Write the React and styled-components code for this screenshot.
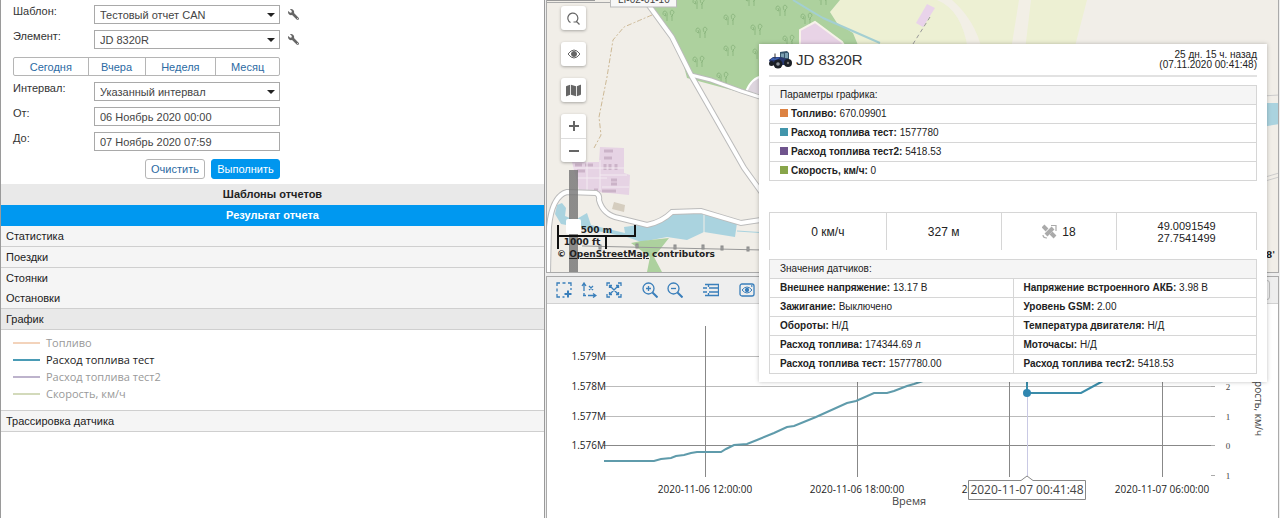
import React from 'react';
import styled, { createGlobalStyle, css } from 'styled-components';
import { FaWrench, FaMap } from 'react-icons/fa';

const GlobalStyle = createGlobalStyle`
  * { box-sizing: border-box; }
  body {
    margin: 0;
    font-family: "Liberation Sans", Arial, sans-serif;
    font-size: 11px;
    color: #222;
    background: #fff;
  }
  button, input, select { font-family: inherit; }
`

const Page = styled.div`
  display: flex;
  gap: 1px;
  min-height: 100vh;
  padding-right: 1px;
  background: #eee;
`

const Sidebar = styled.aside`
  flex: 0 0 545px;
  background: #fff;
  border-left: 1px solid #9a9a9a;
  border-right: 1px solid #9a9a9a;
`

const Workspace = styled.main`
  position: relative;
  flex: 1;
  min-width: 0;
  display: flex;
  flex-direction: column;
  gap: 3px;
`

/* ---------- report form ---------- */

const Form = styled.form`
  display: flex;
  flex-direction: column;
  gap: 6px;
  padding: 5px 12px;
`

const FormRow = styled.div`
  display: flex;
  align-items: flex-start;
  height: 19px;
`

const Label = styled.label`
  flex: 0 0 81px;
  line-height: 12px;
  color: #333;
`

const field = css`
  width: 186px;
  height: 19px;
  padding: 0 5px;
  border: 1px solid #a9a9a9;
  border-radius: 0;
  background: #fff;
  font-size: 11px;
  color: #444;
`

const SelectBox = styled.div`
  position: relative;
  height: 19px;

  select {
    ${field}
    appearance: none;
  }

  &::after {
    content: "";
    position: absolute;
    right: 5px;
    top: 8px;
    border: 4px solid transparent;
    border-top-color: #222;
    border-bottom: 0;
    pointer-events: none;
  }
`

const TextInput = styled.input`
  ${field}
`

const WrenchButton = styled.button`
  display: flex;
  margin: 4px 0 0 8px;
  padding: 0;
  border: 0;
  background: none;
  color: #666;

  svg { transform: scaleX(-1); }
`

const Ranges = styled.div`
  display: flex;
  width: 267px;
  height: 19px;
  margin-top: 2px;
  border: 1px solid #b5b5b5;
  border-radius: 2px;
`

const RangeButton = styled.button`
  flex: ${p => p.$grow} 1 0;
  padding: 0;
  border: 0;
  border-left: ${p => (p.$first ? '0' : '1px solid #b5b5b5')};
  background: none;
  font-size: 11px;
  color: #2b6aa3;
`

const Actions = styled.div`
  display: flex;
  justify-content: flex-end;
  gap: 6px;
  width: 267px;
  margin-top: 2px;
`

const ActionButton = styled.button`
  height: 20px;
  width: ${p => (p.$primary ? '69px' : '60px')};
  padding: 0;
  border: 1px solid ${p => (p.$primary ? '#0096ee' : '#b5b5b5')};
  border-radius: 3px;
  background: ${p => (p.$primary ? '#0096ee' : '#fff')};
  color: ${p => (p.$primary ? '#fff' : '#2b6aa3')};
  font-size: 11px;
`

/* ---------- report result list ---------- */

const SectionTitle = styled.h2`
  margin: 0;
  height: 21px;
  line-height: 21px;
  font-size: 11px;
  font-weight: bold;
  text-align: center;
  background: ${p => (p.$active ? '#0098f0' : '#e9e9e9')};
  color: ${p => (p.$active ? '#fff' : '#222')};
`

const ResultItem = styled.div`
  padding-left: 5px;
  line-height: 20px;
  background: ${p => (p.$open ? '#e9e9e9' : '#f5f5f5')};
  border-bottom: ${p => (p.$plain ? '0' : '1px solid #cfcfcf')};
`

const Legend = styled.ul`
  margin: 0;
  padding: 4px 12px 8px;
  list-style: none;
  border-bottom: 1px solid #cfcfcf;
  font-family: "Open Sans", "Noto Sans", sans-serif;
  font-size: 11px;
`

const LegendItem = styled.li`
  display: flex;
  align-items: center;
  gap: 6px;
  height: 17px;
  color: ${p => (p.$on ? '#222' : '#999')};

  &::before {
    content: "";
    width: 27px;
    height: 2px;
    background: ${p => p.$color};
  }
`

/* ---------- map ---------- */

const MapPanel = styled.section`
  position: relative;
  height: 273px;
  overflow: hidden;
  background: #f1eee8;
  border: 1px solid #aaa;
  border-top: 0;
`

const MapCanvas = styled.svg`
  position: absolute;
  inset: 0;
`

const MapControls = styled.div`
  position: absolute;
  left: 14px;
  top: 6px;
  width: 25px;
  display: flex;
  flex-direction: column;
  align-items: center;
  gap: 12px;
`

const ControlGroup = styled.div`
  width: 100%;
  border-radius: 3px;
  background: #fff;
  box-shadow: 0 1px 3px rgba(0, 0, 0, 0.3);
`

const MapButton = styled.button`
  display: flex;
  align-items: center;
  justify-content: center;
  width: 100%;
  height: 24px;
  padding: 0;
  border: 0;
  background: none;
  color: #666;

  & + & { border-top: 1px solid #ddd; }
`

const ZoomSlider = styled.input`
  position: absolute;
  left: 19px;
  top: 170px;
  width: 15px;
  height: 103px;
  margin: 0;
  appearance: none;
  writing-mode: vertical-lr;
  background: linear-gradient(rgba(115, 115, 115, 0.8), rgba(115, 115, 115, 0.8)) center / 9px 100% no-repeat;

  &::-webkit-slider-thumb {
    appearance: none;
    width: 15px;
    height: 15px;
    border-radius: 2px;
    background: #fff;
  }
`

const MapFooter = styled.div`
  position: absolute;
  left: 10px;
  bottom: 12px;
  font-family: "DejaVu Sans", Verdana, sans-serif;
  font-size: 9px;
  font-weight: bold;
  line-height: 11px;
  color: #222;

  a { color: inherit; }
`

const ScaleLine = styled.div`
  width: ${p => p.$width}px;
  height: 12px;
  text-align: center;
  border: 2px solid #111;
  border-top: 0;
  border-bottom-width: ${p => (p.$metric ? '2px' : '0')};
`

const Coordinates = styled.span`
  position: absolute;
  right: 3px;
  bottom: 12px;
  font-family: "DejaVu Sans", Verdana, sans-serif;
  font-size: 9px;
  font-weight: bold;
`

/* ---------- chart ---------- */

const ChartPanel = styled.section`
  flex: 1;
  background: #fff;
  border: 1px solid #aaa;
  border-bottom: 0;
`

const Toolbar = styled.div`
  display: flex;
  align-items: center;
  gap: 20px;
  height: 27px;
  padding: 0 8px 0 9px;
  background: #eee;
  border-bottom: 1px solid #d2d2d2;
`

const ToolGroup = styled.div`
  display: flex;
  gap: 9px;
`

const ToolButton = styled.button`
  display: flex;
  padding: 0;
  border: 0;
  background: none;
  color: #3a7fbb;
`

const ToolbarEnd = styled.button`
  width: 40px;
  height: 20px;
  margin-left: auto;
  border: 1px solid #bbb;
  border-radius: 3px;
  background: #eee;
`

const ChartSvg = styled.svg`
  display: block;
  width: 100%;
  font-family: "Open Sans", "Noto Sans", sans-serif;
  font-size: 10px;
  fill: #222;
`

/* ---------- unit popup ---------- */

const Popup = styled.article`
  position: absolute;
  right: 12px;
  top: 44px;
  width: 508px;
  padding: 0 10px 8px;
  background: #fff;
  box-shadow: 0 0 4px rgba(0, 0, 0, 0.25);
`

const PopupHeader = styled.header`
  display: flex;
  align-items: center;
  gap: 4px;
  height: 33px;
  margin-bottom: 8px;
  border-bottom: 2px solid #e2e2e2;
`

const UnitName = styled.h3`
  flex: 1;
  margin: 0;
  font-size: 15px;
  font-weight: normal;
  color: #333;
`

const LastSeen = styled.div`
  font-size: 10px;
  line-height: 10px;
  text-align: right;
`

const DataTable = styled.table`
  width: 100%;
  border-collapse: collapse;
  table-layout: fixed;
  font-size: 10px;

  th, td {
    height: 19px;
    padding: 0 0 0 10px;
    line-height: 12px;
    text-align: left;
    border: 1px solid #d6d6d6;
  }

  th {
    background: #f5f5f5;
    font-weight: normal;
  }
`

const Swatch = styled.i`
  display: inline-block;
  width: 8px;
  height: 8px;
  margin-right: 3px;
  background: ${p => p.$color};
`

const Stats = styled.div`
  display: grid;
  grid-template-columns: 116fr 115fr 116fr 140fr;
  height: 38px;
  margin: 31px 0 9px;
  border: 1px solid #d6d6d6;
  border-bottom: 0;
`

const Stat = styled.div`
  display: flex;
  align-items: center;
  justify-content: center;
  gap: 5px;
  font-size: ${p => (p.$small ? '11px' : '12px')};
  line-height: 12px;
  border-left: ${p => (p.$first ? '0' : '1px solid #d6d6d6')};
`

const legend = [
  { name: 'Топливо', color: '#f3d3bb' },
  { name: 'Расход топлива тест', color: '#4a9bb5', on: true },
  { name: 'Расход топлива тест2', color: '#bdb3cc' },
  { name: 'Скорость, км/ч', color: '#d3dabb' },
]

const params = [
  { name: 'Топливо', value: '670.09901', color: '#dd8242' },
  { name: 'Расход топлива тест', value: '1577780', color: '#4195ab' },
  { name: 'Расход топлива тест2', value: '5418.53', color: '#6f548d' },
  { name: 'Скорость, км/ч', value: '0', color: '#88a54a' },
]

const sensors = [
  [['Внешнее напряжение', '13.17 В'], ['Напряжение встроенного АКБ', '3.98 В']],
  [['Зажигание', 'Выключено'], ['Уровень GSM', '2.00']],
  [['Обороты', 'Н/Д'], ['Температура двигателя', 'Н/Д']],
  [['Расход топлива', '174344.69 л'], ['Моточасы', 'Н/Д']],
  [['Расход топлива тест', '1577780.00'], ['Расход топлива тест2', '5418.53']],
]

const trees = [
  [120, 18], [150, 6], [181, 22], [202, 3], [153, 35], [208, 32], [181, 53],
  [150, 64], [174, 80], [210, 56], [233, 13], [258, 21], [274, 2], [240, 43],
]

const pylons = [[53, 247], [90, 246], [128, 247], [156, 247], [175, 248], [201, 249]]

const road = 'M98 0 L114 22 L125 37 L134 55 L144 75 L164 110 L197 168 L215 193'
const sideRoad = 'M144 75 L164 80 L194 91 L225 101'
const villageRoad = 'M1 273 L2 227 Q5 196 20 192 L49 193 Q53 195 52 200 Q56 215 72 218 L100 225 Q115 222 125 212 L154 211 L174 217 L194 223 L220 219'

function MapDrawing() {
  return (
    <MapCanvas width="100%" height="100%" viewBox="0 0 731 272" preserveAspectRatio="xMinYMin slice">
      <path d="M293 0 L283 12 L290 23 L306 33 L313 50 H527 L540 0 Z" fill="#edf0d3" />
      <path d="M390 0 Q415 10 421 50 H435 Q428 20 405 0 Z" fill="#f2efe6" />
      <path d="M472 0 L464 50 H478 L484 0 Z" fill="#f2efe6" />
      <path d="M103 0 H293 L283 12 L290 23 L306 33 L313 50 L225 101 L140 78 L134 55 L125 37 L114 22 Z" fill="#add19e" />
      <g stroke="#8fb982" fill="none">
        {trees.map(([x, y]) => (
          <path key={x + '-' + y} d={`M${x - 1} ${y - 2} q-5 -1 -2 -5 q4 0 3 5 v5 M${x - 2} ${y - 5} l1 3 M${x + 4} ${y - 3} q-2 -4 1 -5 q4 2 0 5 v6 M${x + 4} ${y - 1} l2 -2`} />
        ))}
      </g>
      <path d="M268 22 L253 30 V50 H300 L295 42 Z" fill="#e8d3e6" stroke="#f7f2ea" strokeWidth="2" />
      <path d="M199 92 Q204 78 216 76 V96 Z" fill="#ddd5de" stroke="#fff" strokeWidth="2" />
      <path d="M380 4 L388 8 L376 27 L369 23 Z" fill="#e9d3ea" />
      <path d="M383 17 L366 44" stroke="#999" strokeDasharray="4 3" />
      <path d="M246 0 Q262 10 276 18 L333 43" stroke="#a3cfd2" strokeWidth="2" fill="none" />
      <path d="M105 15 Q84 24 77 27 L66 40 L60 77 L52 117 L54 135 L47 148" stroke="#cdb996" strokeDasharray="5 2 2 2" fill="none" />

      {/* village blocks */}
      <path d="M53 147 L77 148 V173 L83 175 L82 195 L32 190 L25 162 H52 Z" fill="#e6d3e4" />
      <g stroke="#cbb3c8" strokeWidth="3" fill="none">
        <path d="M57 151h9 M57 158h8 M28 165h7 M38 165h8 M58 164v6 M63 164v6 M69 164v6 M30 171h8 M64 180h6 M64 184h6 M47 190h4 M55 191h14" />
      </g>
      <path d="M25 168 H77 M53 175 H80 M30 178 H60 M55 187 H82 M53 160 V190 M40 162 V190" stroke="#f3ebf1" fill="none" />
      <path d="M67 202 L78 205 L77 212 L65 209 Z" fill="#d5cdbf" />

      {/* river and meadow */}
      <path d="M10 205 L15 203 L19 208 L18 216 L28 220 L40 213 L44 225 L78 233 L77 227 L114 222 L130 212 L155 213 L190 223 L188 237 L157 232 L140 240 L120 237 L94 242 L80 237 L40 229 L14 224 L8 214 Z" fill="#aad3df" />
      <path d="M190 231 L220 233" stroke="#aad3df" />
      <path d="M157 214 V233" stroke="#f1eee8" />
      <path d="M84 243 L94 241 L122 238 L107 257 L115 272 H100 L103 257 Z" fill="#add19e" />
      <path d="M35 246 L216 250" stroke="#999" fill="none" />
      {pylons.map(([x, y]) => (
        <rect key={x} x={x - 1} y={y - 2} width="2" height="4" fill="#aaa" stroke="#888" />
      ))}

      <path d={road} stroke="#bbb" strokeWidth="6" fill="none" />
      <path d={sideRoad} stroke="#bbb" strokeWidth="5" fill="none" />
      <path d={villageRoad} stroke="#bbb" strokeWidth="6" fill="none" />
      <path d={road} stroke="#fff" strokeWidth="4" fill="none" />
      <path d={sideRoad} stroke="#fff" strokeWidth="3" fill="none" />
      <path d={villageRoad} stroke="#fff" strokeWidth="4" fill="none" />

      <path d="M715 103 H732 V124 L715 127 Z" fill="#aad3df" />
      <path d="M715 96 L732 95 M715 178 L732 173 M715 182 L732 177" stroke="#ccc" />

      <path d="M0 2.5 H64" stroke="#aaa" />
      <path d="M0 0 H48 V1 H0 Z" fill="#999" />
      <rect x="63.5" y="-10" width="66" height="17" fill="#f7f7f7" stroke="#bbb" />
      <text x="71" y="3" fontSize="10" fill="#444">LI-02-01-10</text>
    </MapCanvas>
  )
}

function ToolIcon({ children }) {
  return (
    <svg width="16" height="16" viewBox="0 0 16 16" fill="none" stroke="currentColor" strokeWidth="1.3">
      {children}
    </svg>
  )
}

function ChartToolbar() {
  return (
    <Toolbar>
      <ToolGroup>
        <ToolButton aria-label="Выделить область">
          <ToolIcon>
            <path d="M1 4V1h3 M6.500 1h3 M12 1h3v3 M15 6v2 M1 6.500v3 M1 12v3h3 M6.500 15h2" />
            <path d="M12 8.500v7 M8.500 12h7" strokeWidth="2" />
          </ToolIcon>
        </ToolButton>
        <ToolButton aria-label="Масштаб по осям">
          <ToolIcon>
            <path d="M3 3V9 M3 11v3 M1 4l2-3 2 3 M2 13.500h3 M7 13.500h7 M12 11.500l3 2-3 2 M8 4l4 4 M12 4l-4 4" />
          </ToolIcon>
        </ToolButton>
        <ToolButton aria-label="Сбросить масштаб">
          <ToolIcon>
            <path d="M1 4V1h3 M12 1h3v3 M15 12v3h-3 M4 15H1v-3" />
            <path d="M4 4l8 8 M12 4l-8 8 M3.500 6V3.500H6 M10 3.500h2.500V6 M12.500 10v2.500H10 M6 12.500H3.500V10" />
          </ToolIcon>
        </ToolButton>
      </ToolGroup>
      <ToolGroup>
        <ToolButton aria-label="Увеличить">
          <ToolIcon>
            <circle cx="6.500" cy="6.500" r="5.500" />
            <path d="M4 6.500h5 M6.500 4v5" />
            <path d="M10.500 10.500l5 5" strokeWidth="2" />
          </ToolIcon>
        </ToolButton>
        <ToolButton aria-label="Уменьшить">
          <ToolIcon>
            <circle cx="6.500" cy="6.500" r="5.500" />
            <path d="M4 6.500h5" />
            <path d="M10.500 10.500l5 5" strokeWidth="2" />
          </ToolIcon>
        </ToolButton>
      </ToolGroup>
      <ToolButton aria-label="Легенда">
        <ToolIcon>
          <path d="M2 2.500h13.500v11H2 M0 6h4 M6 6h9 M0 10h4 M6 10h9 M5.500 2v3 M5.500 11v3" />
        </ToolIcon>
      </ToolButton>
      <ToolButton aria-label="Снимок">
        <ToolIcon>
          <rect x="1" y="2" width="14" height="12" rx="2" />
          <path d="M3 8q5-6 10 0q-5 6-10 0z" strokeWidth="1" />
          <circle cx="8" cy="8" r="1.500" fill="currentColor" />
          <path d="M12 4h1.500" />
        </ToolIcon>
      </ToolButton>
      <ToolbarEnd aria-label="Ещё" />
    </Toolbar>
  )
}

const series = '57,157 107,157 114,155 124,154 129,152 137,151 144,149 150,148 174,148 179,145 187,141 200,140 210,136 227,129 240,123 247,122 269,113 300,99 309,97 327,89 340,89 347,87 360,82 367,80 385,74'

const yTicks = [['1.579M', 52], ['1.578M', 82], ['1.577M', 112], ['1.576M', 141]]
const xTicks = [['2020-11-06 12:00:00', 158], ['2020-11-06 18:00:00', 310], ['2020-11-07 00:00:00', 462], ['2020-11-07 06:00:00', 615]]
const speedTicks = [['2', 82], ['1', 112], ['0', 141], ['1', 171]]

function Chart() {
  return (
    <ChartSvg viewBox="0 0 731 214">
      {yTicks.map(([label, y]) => (
        <g key={label}>
          <path d={`M56 ${y}.5 H666`} stroke={y === 141 ? '#888' : '#bbb'} />
          <text x="59" y={y + 4} textAnchor="end">{label}</text>
        </g>
      ))}
      {xTicks.map(([label, x]) => (
        <g key={label}>
          <path d={`M${x}.5 22 V173`} stroke="#888" />
          <text x={x} y="189" textAnchor="middle">{label}</text>
        </g>
      ))}
      {speedTicks.map(([label, y]) => (
        <g key={y}>
          <path d={`M664 ${y}.5 h4`} stroke="#aaa" />
          <text x="681" y={y + 4} textAnchor="middle" fontSize="9" fontFamily="Liberation Serif, serif" fill="#444">{label}</text>
        </g>
      ))}
      <polyline points={series} fill="none" stroke="#5f9bab" strokeWidth="2" />
      <path d="M480 60 V89 H534 L556 77" fill="none" stroke="#3a8ca9" strokeWidth="2" />
      <path d="M480.500 92 V173" stroke="#c9c9e4" />
      <circle cx="480" cy="89" r="4" fill="#2f86b0" />
      <text x="362" y="201" textAnchor="middle" fontSize="11" fill="#444">Время</text>
      <text transform="translate(708 132) rotate(90)" textAnchor="end" fontSize="10" fill="#444">Скорость, км/ч</text>
      <path d="M421.500 176.500 H474 L480 172 L486 176.500 H538.500 V195.500 H421.500 Z" fill="#fff" stroke="#888" />
      <text x="480" y="190" textAnchor="middle" fontSize="12" fill="#444">2020-11-07 00:41:48</text>
    </ChartSvg>
  )
}

function Tractor() {
  return (
    <svg width="23" height="18" viewBox="0 0 23 18">
      <path d="M11 1 L18 0 L20 2 V12 H11 Z" fill="#34536a" />
      <path d="M12 2.500h3v4h-3z M16 2h3v5h-3z" fill="#7ba0b3" />
      <path d="M0 9 L4 6 H12 L20 9 V14 H2 Z" fill="#27386f" />
      <path d="M2 8 L5 6.500 H11 L8 9 H2 Z" fill="#3d5fb0" />
      <path d="M6 2.500v5" stroke="#333" />
      <circle cx="9" cy="13" r="4.500" fill="#1b1f26" />
      <circle cx="9" cy="13" r="1.800" fill="#8b9199" />
      <circle cx="19" cy="12" r="4" fill="#1b1f26" />
      <circle cx="2.500" cy="12.500" r="2.500" fill="#1b1f26" />
      <circle cx="19" cy="12" r="1.200" fill="#777" />
    </svg>
  )
}

function Satellite() {
  return (
    <svg width="15" height="15" viewBox="0 0 15 15" fill="none" stroke="#aaa">
      <path d="M1 2l4 4 M9 9l4 4" strokeWidth="4" />
      <path d="M11 4L4 11" strokeWidth="4" />
      <path d="M9 1.500h5V7 M1 11q0 3 4 3" strokeWidth="1.200" />
    </svg>
  )
}

function UnitPopup() {
  return (
    <Popup>
      <PopupHeader>
        <Tractor />
        <UnitName>JD 8320R</UnitName>
        <LastSeen>25 дн. 15 ч. назад<br />(07.11.2020 00:41:48)</LastSeen>
      </PopupHeader>
      <DataTable>
        <thead>
          <tr><th>Параметры графика:</th></tr>
        </thead>
        <tbody>
          {params.map(p => (
            <tr key={p.name}>
              <td><Swatch $color={p.color} /><b>{p.name}:</b> {p.value}</td>
            </tr>
          ))}
        </tbody>
      </DataTable>
      <Stats>
        <Stat $first>0 км/ч</Stat>
        <Stat>327 м</Stat>
        <Stat><Satellite />18</Stat>
        <Stat $small>49.0091549<br />27.7541499</Stat>
      </Stats>
      <DataTable>
        <thead>
          <tr><th colSpan="2">Значения датчиков:</th></tr>
        </thead>
        <tbody>
          {sensors.map(row => (
            <tr key={row[0][0]}>
              {row.map(([name, value]) => (
                <td key={name}><b>{name}:</b> {value}</td>
              ))}
            </tr>
          ))}
        </tbody>
      </DataTable>
    </Popup>
  )
}

function SelectRow({ id, label, value, wrench }) {
  return (
    <FormRow>
      <Label htmlFor={id}>{label}</Label>
      <SelectBox>
        <select id={id} defaultValue={value}>
          <option>{value}</option>
        </select>
      </SelectBox>
      {wrench && <WrenchButton type="button" aria-label="Настроить"><FaWrench size={11} /></WrenchButton>}
    </FormRow>
  )
}

function ReportForm() {
  return (
    <Form>
      <SelectRow id="template" label="Шаблон:" value="Тестовый отчет CAN" wrench />
      <SelectRow id="unit" label="Элемент:" value="JD 8320R" wrench />
      <Ranges>
        <RangeButton type="button" $grow={75} $first>Сегодня</RangeButton>
        <RangeButton type="button" $grow={57}>Вчера</RangeButton>
        <RangeButton type="button" $grow={71}>Неделя</RangeButton>
        <RangeButton type="button" $grow={64}>Месяц</RangeButton>
      </Ranges>
      <SelectRow id="interval" label="Интервал:" value="Указанный интервал" />
      <FormRow>
        <Label htmlFor="from">От:</Label>
        <TextInput id="from" defaultValue="06 Ноябрь 2020 00:00" />
      </FormRow>
      <FormRow>
        <Label htmlFor="to">До:</Label>
        <TextInput id="to" defaultValue="07 Ноябрь 2020 07:59" />
      </FormRow>
      <Actions>
        <ActionButton type="button">Очистить</ActionButton>
        <ActionButton type="button" $primary>Выполнить</ActionButton>
      </Actions>
    </Form>
  )
}

export default function App() {
  return (
    <Page>
      <GlobalStyle />
      <Sidebar>
        <ReportForm />
        <SectionTitle>Шаблоны отчетов</SectionTitle>
        <SectionTitle $active>Результат отчета</SectionTitle>
        <ResultItem>Статистика</ResultItem>
        <ResultItem>Поездки</ResultItem>
        <ResultItem $plain>Стоянки</ResultItem>
        <ResultItem>Остановки</ResultItem>
        <ResultItem $open>График</ResultItem>
        <Legend>
          {legend.map(l => (
            <LegendItem key={l.name} $color={l.color} $on={l.on}>{l.name}</LegendItem>
          ))}
        </Legend>
        <ResultItem>Трассировка датчика</ResultItem>
      </Sidebar>

      <Workspace>
        <MapPanel>
          <MapDrawing />
          <ZoomSlider type="range" aria-label="Масштаб карты" defaultValue="56" />
          <MapFooter>
            <ScaleLine $width={79} $metric>500 m</ScaleLine>
            <ScaleLine $width={50}>1000 ft</ScaleLine>
            © <a href="#osm">OpenStreetMap</a> contributors
          </MapFooter>
          <Coordinates>8'</Coordinates>
          <MapControls>
            <ControlGroup>
              <MapButton aria-label="Поиск">
                <svg width="13" height="13" viewBox="0 0 13 13" fill="none" stroke="currentColor" strokeWidth="1.2">
                  <path d="M3.500 10.500A5 5 0 1 1 9.500 9.500 M6.500 10h3 M9 9l3.500 3.500" />
                </svg>
              </MapButton>
            </ControlGroup>
            <ControlGroup>
              <MapButton aria-label="Видимость">
                <svg width="14" height="10" viewBox="0 0 14 10" fill="none" stroke="currentColor">
                  <path d="M1 5q6-8 12 0q-6 8-12 0z" />
                  <circle cx="7" cy="5" r="2.500" fill="currentColor" />
                </svg>
              </MapButton>
            </ControlGroup>
            <ControlGroup>
              <MapButton aria-label="Слои"><FaMap size={15} /></MapButton>
            </ControlGroup>
            <ControlGroup>
              <MapButton aria-label="Приблизить">
                <svg width="10" height="10" viewBox="0 0 10 10" stroke="currentColor" strokeWidth="2"><path d="M0 5h10 M5 0v10" /></svg>
              </MapButton>
              <MapButton aria-label="Отдалить">
                <svg width="10" height="10" viewBox="0 0 10 10" stroke="currentColor" strokeWidth="2"><path d="M0 5h10" /></svg>
              </MapButton>
            </ControlGroup>
          </MapControls>
        </MapPanel>

        <ChartPanel>
          <ChartToolbar />
          <Chart />
        </ChartPanel>

        <UnitPopup />
      </Workspace>
    </Page>
  )
}
